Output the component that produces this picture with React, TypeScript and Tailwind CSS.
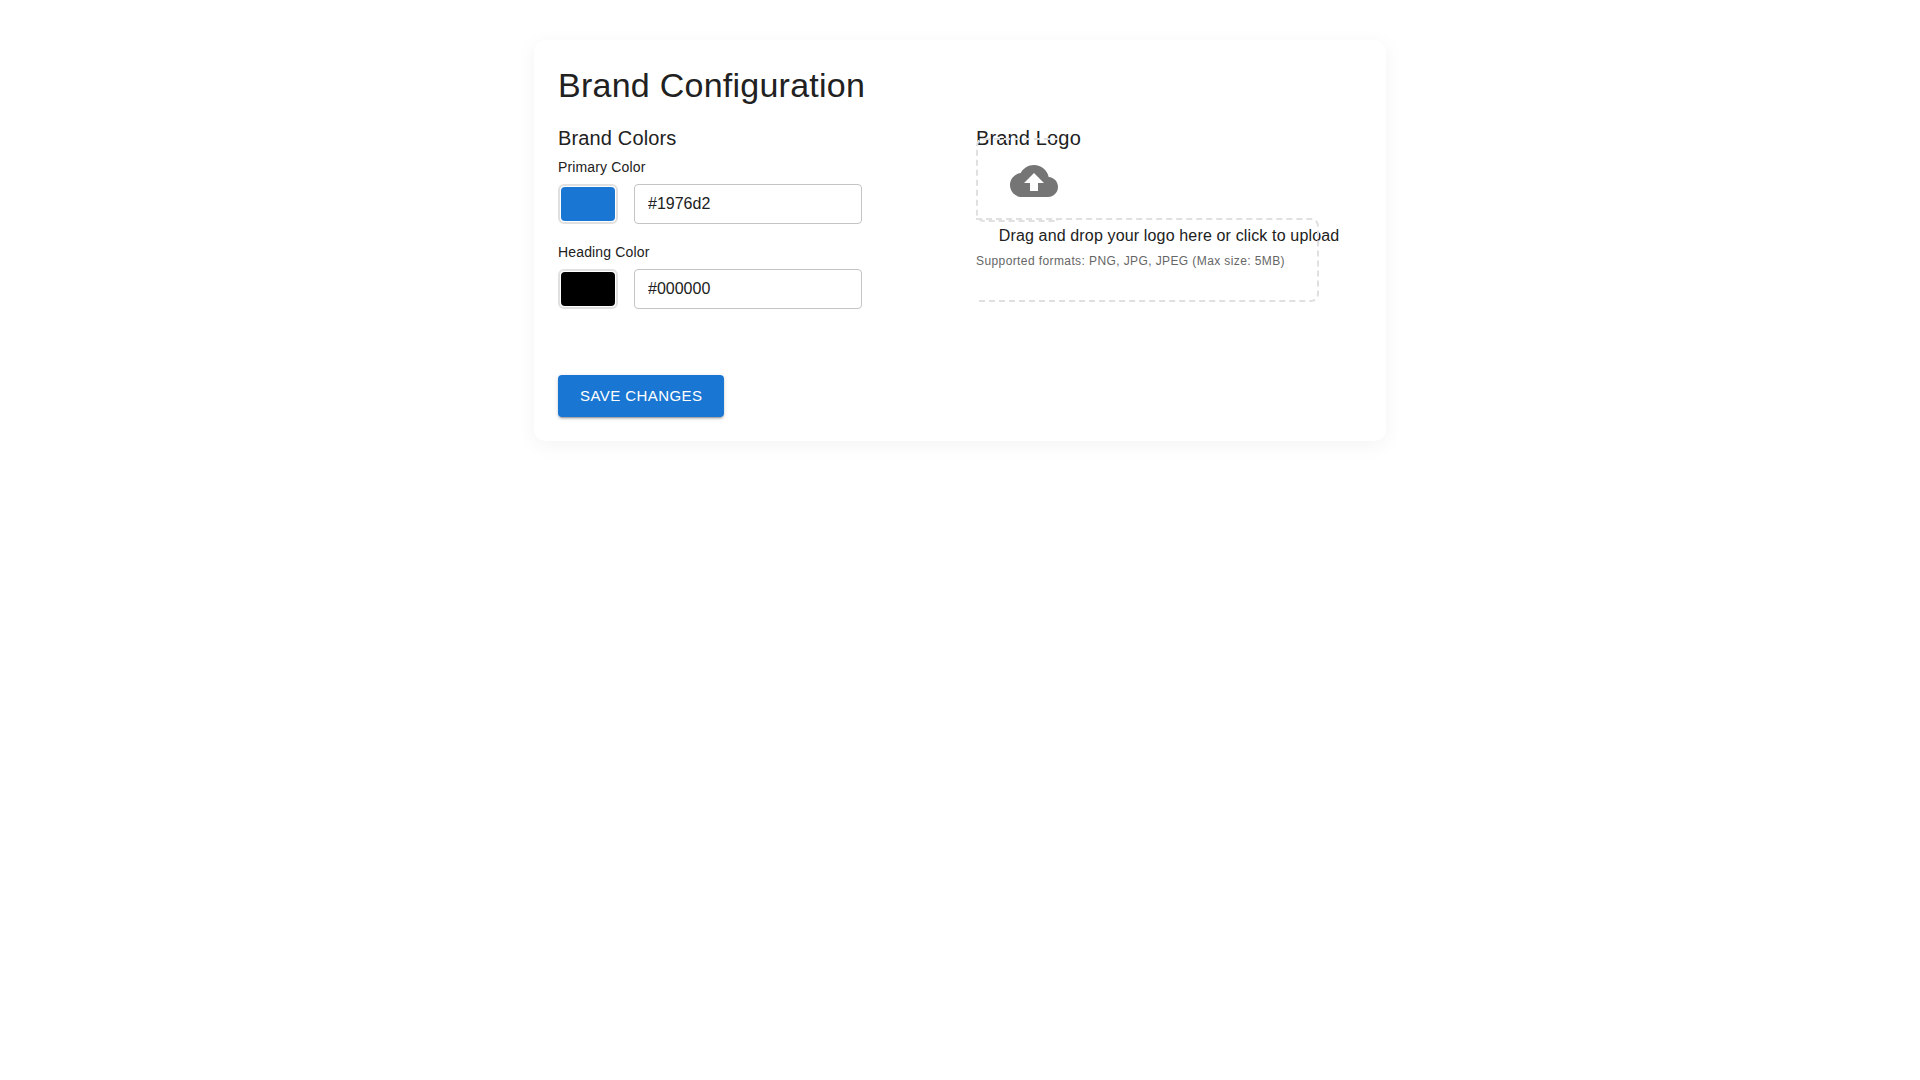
import { useState } from 'react';

function ColorField({ label, initial }: { label: string; initial: string }) {
  const [value, setValue] = useState(initial);
  return (
    <div className="mb-[18px]">
      <div className="text-sm leading-5 tracking-[0.01071em] text-[#212121] mb-[7px]">{label}</div>
      <div className="flex items-center gap-4">
        <div className="w-[60px] h-10 rounded-md border-2 border-[#e0e0e0] p-px">
          <div className="w-full h-full rounded-[4px]" style={{ backgroundColor: value }} />
        </div>
        <input
          value={value}
          onChange={(e) => setValue(e.target.value)}
          className="w-[228px] h-10 px-[13px] border border-[#c4c4c4] rounded text-base text-[#212121] outline-none"
        />
      </div>
    </div>
  );
}

export default function App() {
  return (
    <div className="min-h-screen bg-white font-['Liberation_Sans',Arial,sans-serif] text-[#212121]">
      <div className="max-w-[900px] mx-auto px-6 pt-10">
        <div className="bg-white rounded-xl p-6 shadow-[0_4px_20px_rgba(0,0,0,0.05)]">
          <h1 className="text-[34px] leading-[42px] tracking-[0.00735em] mb-4">Brand Configuration</h1>

          <div className="grid grid-cols-2 gap-8">
            <div>
              <h2 className="text-xl leading-8 tracking-[0.0075em] mb-[3px]">Brand Colors</h2>
              <ColorField label="Primary Color" initial="#1976d2" />
              <ColorField label="Heading Color" initial="#000000" />
            </div>

            <div>
              <h2 className="text-xl leading-8 tracking-[0.0075em] mb-[3px]">Brand Logo</h2>
              {/* inline box on purpose: the dashed border breaks around the block text */}
              <label className="border-2 border-dashed border-[#e0e0e0] rounded-lg p-8 text-sm leading-5 cursor-pointer">
                <svg className="inline-block w-12 h-12 fill-[#757575]" viewBox="0 0 24 24">
                  <path d="M19.35 10.04C18.67 6.59 15.64 4 12 4 9.11 4 6.6 5.64 5.35 8.04 2.34 8.36 0 10.91 0 14c0 3.31 2.69 6 6 6h13c2.76 0 5-2.24 5-5 0-2.64-2.05-4.78-4.65-4.96zM14 13v4h-4v-4H7l5-5 5 5h-3z" />
                </svg>
                <div className="text-base leading-6 tracking-[0.00938em] text-center mt-[19px]">
                  Drag and drop your logo here or click to upload
                </div>
                <span className="text-xs tracking-[0.03333em] text-[#666666]">
                  Supported formats: PNG, JPG, JPEG (Max size: 5MB)
                </span>
              </label>
            </div>
          </div>

          <button className="mt-[48px] h-[42px] px-[22px] bg-[#1976d2] text-white text-[15px] leading-[26px] tracking-[0.02857em] uppercase rounded shadow-[0_3px_1px_-2px_rgba(0,0,0,0.2),0_2px_2px_0_rgba(0,0,0,0.14),0_1px_5px_0_rgba(0,0,0,0.12)]">
            Save Changes
          </button>
        </div>
      </div>
    </div>
  );
}
